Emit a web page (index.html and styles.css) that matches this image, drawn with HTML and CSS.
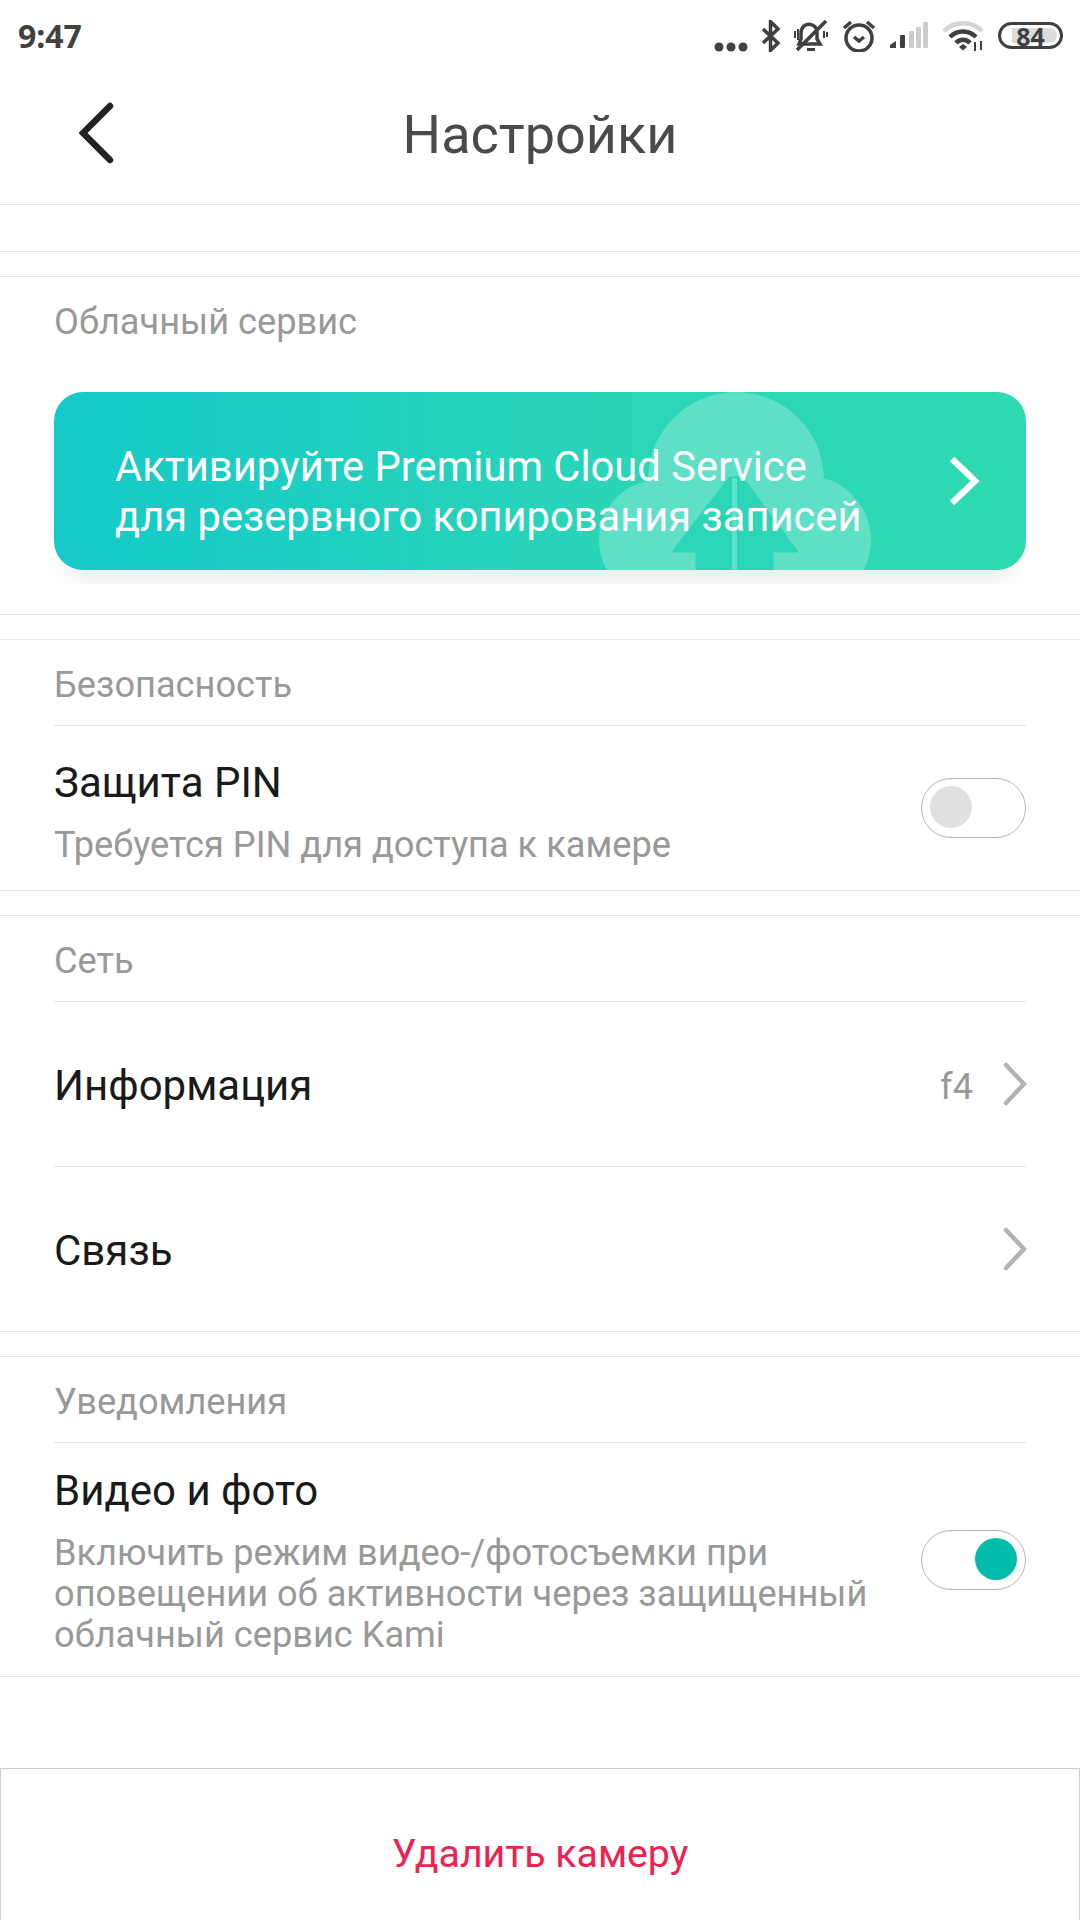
FILE: index.html
```html
<!DOCTYPE html>
<html lang="ru">
<head>
  <meta charset="UTF-8">
  <meta name="viewport" content="width=device-width, initial-scale=1.0">
  <title>Настройки</title>
  <link rel="stylesheet" href="styles.css">
</head>
<body>
  <header class="topbar">
    <div class="status">
      <span class="clock">9:47</span>
      <div class="status-icons">
        <svg class="ico-dots" width="34" height="10" viewBox="0 0 34 10"><circle cx="5" cy="5" r="4.5"/><circle cx="17" cy="5" r="4.5"/><circle cx="29" cy="5" r="4.5"/></svg>
        <svg class="ico-bt" width="18" height="32" viewBox="0 0 18 32"><path d="M1 9l15 14-7.500 7.500V1.500L16 9 1 23"/></svg>
        <svg class="ico-mute" width="34" height="32" viewBox="0 0 34 32"><path d="M5 24h21l-3-5v-7a8 8 0 0 0-13-6c-2 2-3 4-3 7v6z"/><path d="M32 1L3 30"/><path d="M13 29.500h8" stroke-width="3"/><path d="M1 11v7M4 9v11M30 11v7M33 12v5" stroke-width="2"/></svg>
        <svg class="ico-alarm" width="34" height="33" viewBox="0 0 34 33"><circle cx="17" cy="19" r="13"/><path d="M12 18l5 4 5-4M2 9l7-6M32 9l-7-6"/></svg>
        <svg class="ico-signal" width="38" height="27" viewBox="0 0 38 27"><path d="M0 26v-3l6-4v7z" fill="#404040"/><rect x="10" y="13" width="5" height="13" rx="1" fill="#404040"/><rect x="19" y="9" width="5" height="17" rx="1" fill="#ccc"/><rect x="26" y="5" width="5" height="21" rx="1" fill="#ccc"/><rect x="33" y="0" width="5" height="26" rx="1" fill="#ccc"/></svg>
        <svg class="ico-wifi" width="42" height="32" viewBox="0 0 42 32"><path d="M2 11a27 27 0 0 1 38 0" stroke="#d4d4d4"/><path d="M8 17a18 18 0 0 1 26 0M14 23a9 9 0 0 1 14 0" stroke="#404040"/><path d="M17 27l4-3 4 3-4 3.500z" fill="#404040" stroke="none"/><path d="M33 22v9M39 21v9" stroke="#404040" stroke-width="2"/></svg>
        <div class="battery"><span class="battery-fill"></span><span class="battery-num">84</span></div>
      </div>
    </div>
    <div class="navbar">
      <svg class="back" width="36" height="62" viewBox="0 0 36 62"><path d="M31 4L4 31l27 27"/></svg>
      <h1>Настройки</h1>
    </div>
  </header>

  <div class="strip"></div>

  <section class="group group-cloud">
    <h2 class="group-title">Облачный сервис</h2>
    <a class="promo">
      <svg class="promo-art" width="972" height="178" viewBox="0 0 972 178">
        <g fill="#fff" opacity=".24">
          <circle cx="682" cy="88" r="88"/>
          <circle cx="605" cy="148" r="60"/>
          <circle cx="753" cy="148" r="64"/>
        </g>
      </svg>
      <svg class="promo-art" width="972" height="178" viewBox="0 0 972 178">
        <path d="M676 86L620 159H643V178H718V159H742L688 86z" fill="#2bd6b6" stroke="#2bd6b6" stroke-width="3" stroke-linejoin="round"/>
        <rect x="678" y="86" width="5" height="92" fill="#fff" opacity=".24"/>
      </svg>
      <p class="promo-text">Активируйте Premium Cloud Service<br>для резервного копирования записей</p>
      <svg class="promo-arrow" width="32" height="50" viewBox="0 0 32 50"><path d="M3 3l23 22L3 47"/></svg>
    </a>
  </section>

  <section class="group group-safe">
    <h2 class="group-title small">Безопасность</h2>
    <div class="row row-toggle row-pin">
      <div class="row-body">
        <div class="row-name">Защита PIN</div>
        <div class="row-desc">Требуется PIN для доступа к камере</div>
      </div>
      <span class="toggle"></span>
    </div>
  </section>

  <section class="group">
    <h2 class="group-title small">Сеть</h2>
    <div class="row row-link">
      <div class="row-name">Информация</div>
      <span class="row-value">f4</span>
      <svg class="chevron" width="24" height="44" viewBox="0 0 24 44"><path d="M3 3l18 19L3 41"/></svg>
    </div>
    <div class="row row-link">
      <div class="row-name">Связь</div>
      <svg class="chevron" width="24" height="44" viewBox="0 0 24 44"><path d="M3 3l18 19L3 41"/></svg>
    </div>
  </section>

  <section class="group">
    <h2 class="group-title small">Уведомления</h2>
    <div class="row row-toggle row-video">
      <div class="row-body">
        <div class="row-name">Видео и фото</div>
        <div class="row-desc">Включить режим видео-/фотосъемки при<br>оповещении об активности через защищенный<br>облачный сервис Kami</div>
      </div>
      <span class="toggle on"></span>
    </div>
  </section>

  <div class="delete">Удалить камеру</div>
</body>
</html>
```

FILE: styles.css
```css
* {
  box-sizing: border-box;
}

body {
  font-family: Roboto, "Noto Sans", sans-serif;
  margin: 0;
  padding: 0;
  width: 1080px;
  height: 1920px;
  overflow: hidden;
  background-color: #fff;
  color: #1a1a1a;
}

.topbar {
  height: 205px;
  border-bottom: 1px solid #e4e4e4;
}

.status {
  height: 68px;
  display: flex;
  align-items: center;
  padding: 3px 17px 0 18px;
  justify-content: space-between;
}

.clock {
  font-family: "Noto Sans", sans-serif;
  font-weight: 700;
  font-size: 32px;
  color: #404040;
}

.status-icons {
  display: flex;
  align-items: center;
  gap: 14px;
}

.status-icons svg {
  fill: none;
  stroke: #404040;
  stroke-width: 3.500;
}

.status-icons .ico-signal {
  stroke: none;
}

.ico-dots {
  fill: #404040 !important;
  stroke: none !important;
  margin-top: 22px;
}

.ico-wifi {
  stroke-width: 4.500 !important;
}

.battery {
  position: relative;
  width: 65px;
  height: 27px;
  border: 3.500px solid #404040;
  border-radius: 14px;
  display: flex;
  align-items: center;
  justify-content: center;
}

.battery-fill {
  position: absolute;
  left: 11px;
  top: 3px;
  bottom: 3px;
  right: 3px;
  background: #dcdcdc;
  border-radius: 0 8px 8px 0;
}

.battery-num {
  position: relative;
  font-family: "Noto Sans", sans-serif;
  font-weight: 700;
  font-size: 25px;
  line-height: 20px;
  color: #404040;
}

.navbar {
  position: relative;
  height: 136px;
  display: flex;
  align-items: center;
  justify-content: center;
}

.navbar h1 {
  margin: 0 0 4px;
  font-weight: 400;
  font-size: 54px;
  color: #4a4a4a;
}

.back {
  position: absolute;
  left: 79px;
  top: 34px;
  fill: none;
  stroke: #222;
  stroke-width: 6.500;
  stroke-linecap: round;
  stroke-linejoin: miter;
}

.strip {
  height: 47px;
  border-bottom: 1px solid #e4e4e4;
}

.group {
  margin-top: 24px;
  border-top: 1px solid #e4e4e4;
  border-bottom: 1px solid #e4e4e4;
}

.group-title {
  margin: 0;
  padding: 0 54px;
  font-weight: 400;
  font-size: 36.200px;
  line-height: 40px;
  color: #999;
}

.group-cloud {
  height: 339px;
  padding-top: 25px;
}

.promo {
  position: relative;
  height: 178px;
  margin: 50px 54px 0;
  padding: 0 61px;
  display: flex;
  align-items: center;
  justify-content: space-between;
  border-radius: 29px;
  background: linear-gradient(90deg, #14c9c9 0%, #2bd6b6 60%, #2fd9b3 100%);
}

.promo::after {
  content: "";
  position: absolute;
  left: 0;
  right: 0;
  top: calc(100% - 29px);
  height: 43px;
  background:
    linear-gradient(90deg, #fff, rgba(255, 255, 255, 0) 40px, rgba(255, 255, 255, 0) calc(100% - 40px), #fff),
    linear-gradient(#f2f2f2 60%, #eeeeee 68%, #f8f8f8);
  z-index: -1;
}

.promo-art {
  position: absolute;
  left: 0;
  top: 0;
  border-radius: 29px;
}

.promo-text {
  position: relative;
  margin: 21px 0 0;
  font-size: 41.700px;
  line-height: 50px;
  color: #fff;
  white-space: nowrap;
}

.promo-arrow {
  position: relative;
  margin-right: -16px;
  fill: none;
  stroke: #fff;
  stroke-width: 6.500;
}

.small {
  padding-top: 25px;
  height: 85px;
  border-bottom: 0;
}

.group .row {
  margin: 0 54px;
  border-top: 1px solid #e4e4e4;
  display: flex;
  align-items: center;
}

.row-name {
  font-size: 42px;
  line-height: 50px;
  color: #1a1a1a;
}

.row-desc {
  font-size: 36.200px;
  line-height: 41px;
  color: #999;
  margin-top: 16px;
}

.row-pin .row-body {
  padding-top: 6px;
}

.row-video .row-body {
  padding-top: 2px;
}

.row-body {
  flex: 1;
}

.row-toggle {
  justify-content: space-between;
}

.row-pin {
  height: 165px;
}

.row-video {
  height: 234px;
}

.row-link {
  height: 165px;
  padding-top: 4px;
}

.row-link .chevron {
  margin-top: -4px;
}

.row-value {
  margin-left: auto;
  margin-right: 30px;
  font-size: 36.200px;
  color: #999;
}

.row-name + .chevron {
  margin-left: auto;
}

.chevron {
  margin-right: -1px;
  fill: none;
  stroke: #b3b3b3;
  stroke-width: 4.500;
  stroke-linecap: round;
}

.toggle {
  position: relative;
  flex: none;
  width: 105px;
  height: 60px;
  border: 1.500px solid #b5b5b5;
  border-radius: 30px;
}

.toggle::after {
  content: "";
  position: absolute;
  left: 8px;
  top: 7px;
  width: 42px;
  height: 42px;
  border-radius: 50%;
  background: #e0e0e0;
}

.toggle.on::after {
  left: 53px;
  background: #02bcab;
}

.delete {
  margin-top: 91px;
  height: 160px;
  padding-top: 10px;
  border: 1.500px solid #cfcfcf;
  border-bottom: 0;
  display: flex;
  align-items: center;
  justify-content: center;
  font-size: 39.300px;
  color: #f0204f;
}
```
